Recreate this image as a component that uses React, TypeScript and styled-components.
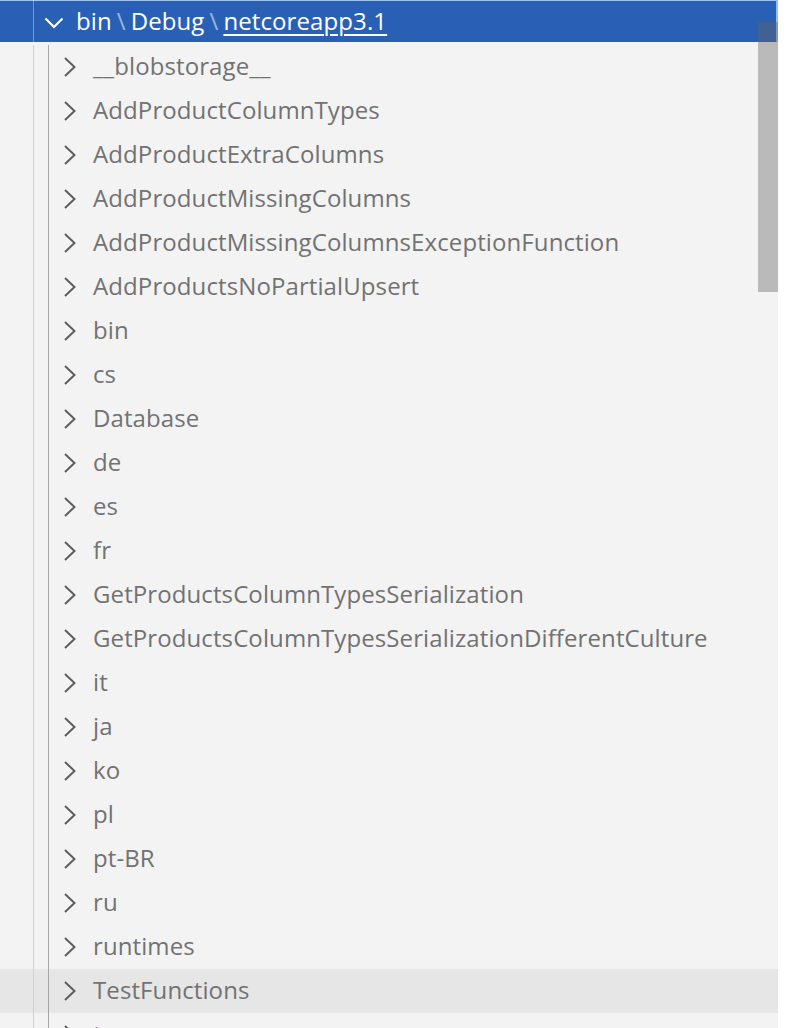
import React from "react";
import styled, { createGlobalStyle } from "styled-components";

const Global = createGlobalStyle`
  html, body { margin: 0; padding: 0; background: #ffffff; }
  body { font-family: "Open Sans", "Noto Sans", "Liberation Sans", sans-serif; }
`;

const Panel = styled.div`
  position: relative;
  width: 778px;
  height: 1028px;
  background: #f3f3f3;
  overflow: hidden;
`;

const List = styled.div`
  display: flex;
  flex-direction: column;
`;

const HeaderRow = styled.div`
  position: relative;
  display: flex;
  align-items: stretch;
  height: 45px;
  background: linear-gradient(
    to bottom,
    #9cc4f4 0px,
    #9cc4f4 1px,
    #2a5fb6 1px,
    #2a5fb6 42px,
    #f3f3f3 42px
  );
`;

const HeaderEdge = styled.div`
  position: absolute;
  right: 0;
  top: 0;
  width: 2px;
  height: 42px;
  background: #8fbcf2;
`;

const Row = styled.div<{ $hover?: boolean }>`
  display: flex;
  align-items: stretch;
  height: 44px;
  background: ${(p) => (p.$hover ? "#e6e6e6" : "transparent")};
`;

const Spacer = styled.div<{ $w: number }>`
  width: ${(p) => p.$w}px;
  flex: none;
`;

const Guide = styled.div<{ $w: number; $color: string }>`
  width: ${(p) => p.$w}px;
  flex: none;
  border-left: 1px solid ${(p) => p.$color};
  box-sizing: border-box;
`;

const Twistie = styled.div<{ $w: number }>`
  width: ${(p) => p.$w}px;
  flex: none;
  display: flex;
  align-items: center;
`;

const Label = styled.div<{ $header?: boolean }>`
  display: flex;
  align-items: center;
  white-space: nowrap;
  font-size: 24px;
  letter-spacing: 0.1px;
  color: ${(p) => (p.$header ? "#ffffff" : "#727272")};
  padding-bottom: ${(p) => (p.$header ? "4px" : "3px")};
`;

const Sep = styled.span`
  color: rgba(255, 255, 255, 0.55);
  margin: 0 5px;
`;

const Current = styled.span`
  text-decoration: underline;
  text-underline-offset: 4px;
  text-decoration-thickness: 2px;
`;

const Scrollbar = styled.div`
  position: absolute;
  right: 0;
  top: 22px;
  width: 20px;
  height: 270px;
  background: rgba(100, 100, 100, 0.4);
`;

const ChevronRight = () => (
  <svg width="14" height="22" viewBox="0 0 14 22" fill="none">
    <path d="M2 2 L11.5 11 L2 20" stroke="#5e5e5e" strokeWidth="2" />
  </svg>
);

const ChevronDown = () => (
  <svg width="20" height="12" viewBox="0 0 20 12" fill="none">
    <path d="M1.5 1.5 L10 10 L18.5 1.5" stroke="#ffffff" strokeWidth="2.2" />
  </svg>
);

const folders = [
  "__blobstorage__",
  "AddProductColumnTypes",
  "AddProductExtraColumns",
  "AddProductMissingColumns",
  "AddProductMissingColumnsExceptionFunction",
  "AddProductsNoPartialUpsert",
  "bin",
  "cs",
  "Database",
  "de",
  "es",
  "fr",
  "GetProductsColumnTypesSerialization",
  "GetProductsColumnTypesSerializationDifferentCulture",
  "it",
  "ja",
  "ko",
  "pl",
  "pt-BR",
  "ru",
  "runtimes",
  "TestFunctions",
  "tr",
];

export default function App() {
  return (
    <>
      <Global />
      <Panel>
        <List>
          <HeaderRow>
            <Spacer $w={33} />
            <Guide $w={11} $color="rgba(255,255,255,0.35)" />
            <Twistie $w={32}>
              <ChevronDown />
            </Twistie>
            <Label $header>
              bin<Sep>\</Sep>Debug<Sep>\</Sep>
              <Current>netcoreapp3.1</Current>
            </Label>
            <HeaderEdge />
          </HeaderRow>
          {folders.map((name) => (
            <Row key={name} $hover={name === "TestFunctions"}>
              <Spacer $w={33} />
              <Guide $w={15} $color="#d0d0d0" />
              <Guide $w={15} $color="#a6a6a6" />
              <Twistie $w={30}>
                <ChevronRight />
              </Twistie>
              <Label>{name}</Label>
            </Row>
          ))}
        </List>
        <Scrollbar />
      </Panel>
    </>
  );
}
